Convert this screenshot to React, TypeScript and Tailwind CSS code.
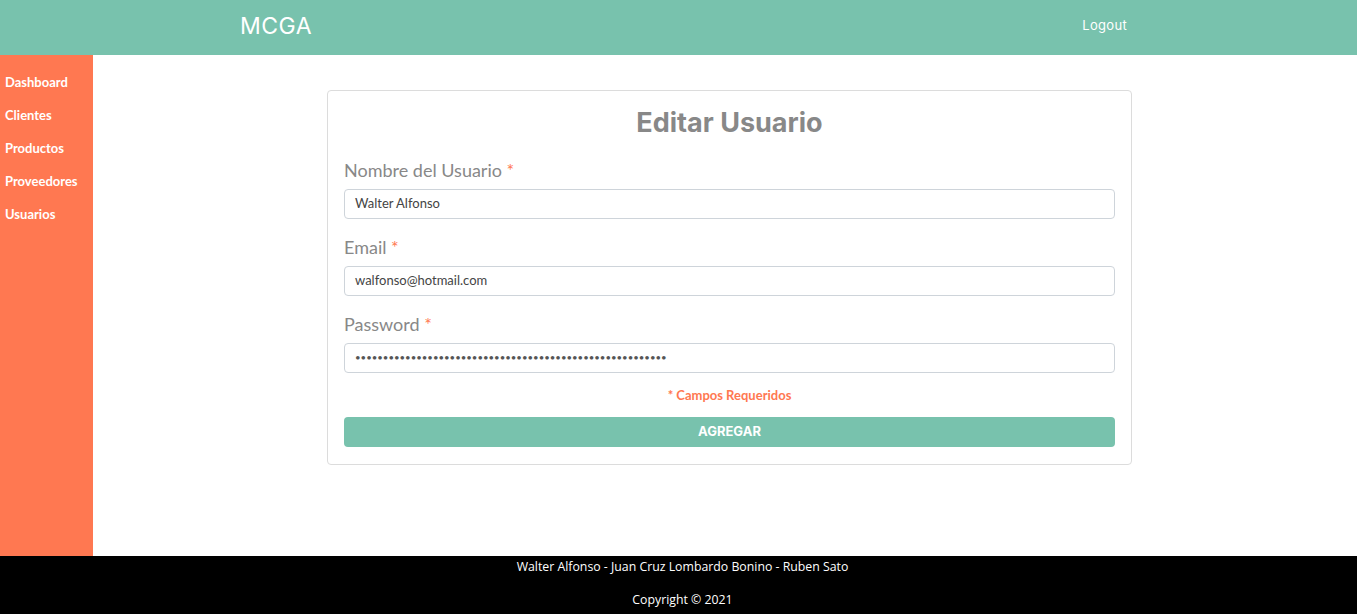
import React from "react";

const links = ["Dashboard", "Clientes", "Productos", "Proveedores", "Usuarios"];

const Field = ({
  label,
  value,
  mt,
  dots,
}: {
  label: string;
  value: string;
  mt: string;
  dots?: boolean;
}) => (
  <div className={mt}>
    <label className="block text-[18px] leading-[22px] text-[#888888]">
      {label} <span className="text-[#ff7851]">*</span>
    </label>
    <div
      className={
        dots
          ? "mt-[8px] flex h-[30px] items-center rounded-[4px] border border-[#ced4da] px-[10px] text-[9.6px] text-[#555]"
          : "mt-[8px] flex h-[30px] items-center rounded-[4px] border border-[#ced4da] px-[10px] text-[13px] text-[#444]"
      }
    >
      {value}
    </div>
  </div>
);

export default function App() {
  return (
    <div className="flex h-[614px] flex-col font-['Lato',sans-serif]">
      {/* Header */}
      <header className="flex h-[55px] shrink-0 items-center justify-between bg-[#78c2ad] pb-[3px] pl-[240px] pr-[230px] text-white">
        <span className="font-['Inter',sans-serif] text-[23px] tracking-[0.5px]">MCGA</span>
        <span className="font-['Inter',sans-serif] text-[13px] tracking-[0.3px]">Logout</span>
      </header>

      <div className="flex flex-1">
        {/* Sidebar */}
        <nav className="w-[93px] shrink-0 bg-[#ff7851] pl-[5px] pt-[18px]">
          {links.map((l) => (
            <div key={l} className="h-[33px] text-[13px] font-bold leading-[18px] text-white">
              {l}
            </div>
          ))}
        </nav>

        {/* Main */}
        <main className="flex-1 pl-[234px] pt-[35px]">
          <div className="w-[805px] rounded-[4px] border border-[#dcdcdc] px-[16px] pb-[17px] pt-[14px]">
            <h1 className="text-center font-['Inter',sans-serif] text-[27px] font-bold leading-[36px] text-[#888888]">
              Editar Usuario
            </h1>
            <Field label="Nombre del Usuario" value="Walter Alfonso" mt="mt-[18px]" />
            <Field label="Email" value="walfonso@hotmail.com" mt="mt-[17px]" />
            <Field label="Password" value={"•".repeat(56)} mt="mt-[17px]" dots />
            <p className="mt-[13px] text-center text-[13px] font-bold leading-[18px] text-[#ff7851]">
              * Campos Requeridos
            </p>
            <button className="mt-[13px] h-[30px] w-full rounded-[4px] bg-[#78c2ad] font-['Inter',sans-serif] text-[13px] font-bold text-white">
              AGREGAR
            </button>
          </div>
        </main>
      </div>

      {/* Footer */}
      <footer className="h-[58px] shrink-0 bg-black pt-[2px] text-center font-['Open_Sans',sans-serif] text-[12.3px] leading-[17px] text-white">
        <p className="pl-[8px]">Walter Alfonso - Juan Cruz Lombardo Bonino - Ruben Sato</p>
        <p className="mt-[16px] pl-[8px]">Copyright © 2021</p>
      </footer>
    </div>
  );
}
